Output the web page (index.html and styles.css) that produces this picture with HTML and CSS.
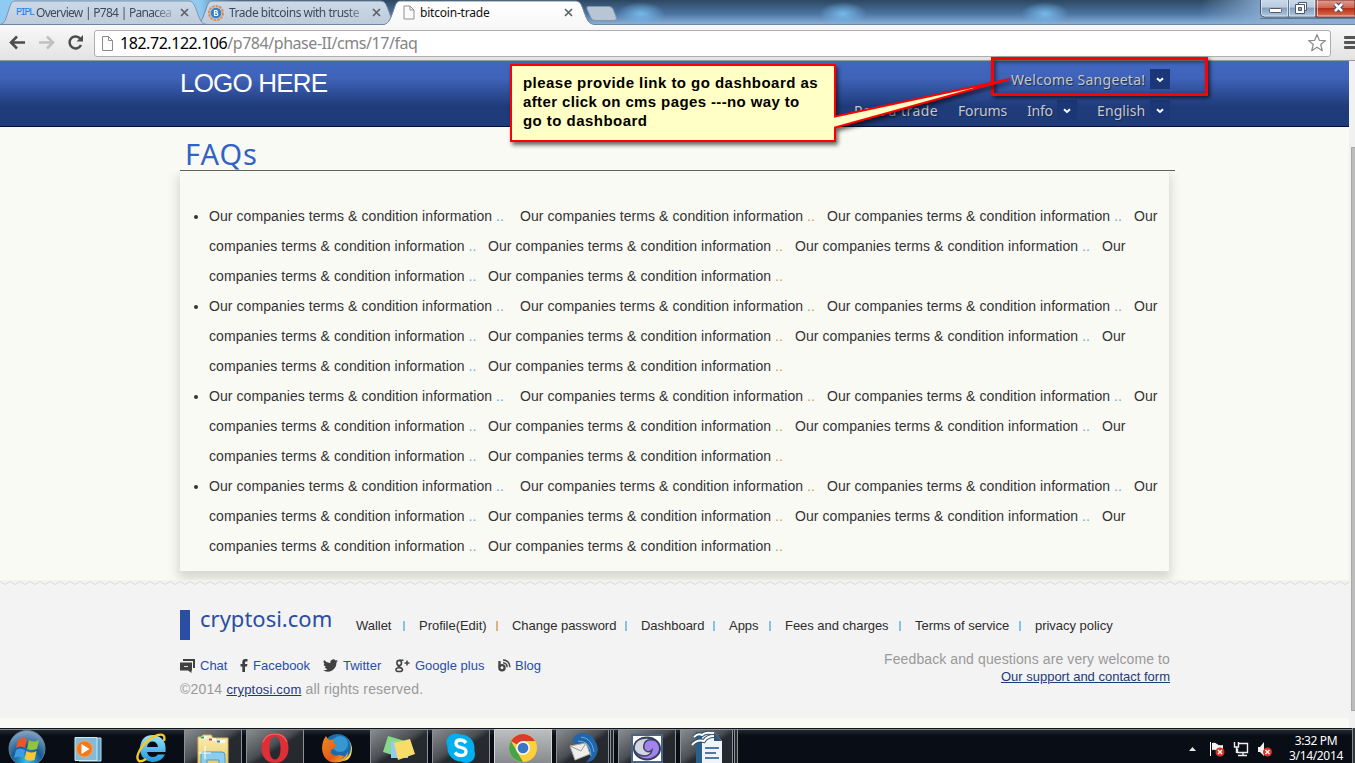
FILE: index.html
```
<!DOCTYPE html>
<html lang="en">
<head>
<meta charset="utf-8">
<title>bitcoin-trade</title>
<link rel="stylesheet" href="styles.css">
</head>
<body>
<div class="screen">
  <div class="tabstrip">
    <svg class="tab-shapes" width="1355" height="25" viewBox="0 0 1355 25">
      <defs>
        <linearGradient id="tabg" x1="0" y1="0" x2="0" y2="1"><stop offset="0" stop-color="#ccd9e8"/><stop offset="1" stop-color="#becbdb"/></linearGradient>
        <linearGradient id="actg" x1="0" y1="0" x2="0" y2="1"><stop offset="0" stop-color="#fff"/><stop offset="1" stop-color="#f8f8f8"/></linearGradient>
      </defs>
      <path d="M195 24.5 C201 24 202 20 206 9 C208 3 209 1 213 1 H380 C385 1 386 4 388 9 C392 20 393 24 399 24.5Z" fill="url(#tabg)" stroke="#74889d"/>
      <path d="M0 24.500 C5 24 6 18 9 9 C11 3 12 1 16 1 H188 C193 1 194 4 196 9 C200 20 201 24 207 24.500Z" fill="url(#tabg)" stroke="#8092a5"/>
      <path d="M380 25 C389 25 390 20 394 9 C396 3 397 1 401 1 H575 C580 1 581 4 583 9 C587 20 588 24 595 24.500 V26 H380Z" fill="url(#actg)" stroke="#71849a"/>
      <path d="M588 6.500 H609 Q612 6.500 613 9 L616.500 18 Q617 20.500 614 20.500 H595 Q592 20.500 591 18 L587 9 Q586.500 6.500 588 6.500Z" fill="#b7c5d5" stroke="#8395a9"/>
      <path d="M0 24.500 H382 M594 24.500 H1355" stroke="#6c87a6" fill="none"/>
    </svg>
    <div class="tab tab-one"><span class="pipl">PIPL</span><span class="tab-title fade title-one">Overview | P784 | Panacea</span>
      <svg class="x" width="9" height="9" viewBox="0 0 9 9"><path d="M1 1 8 8M8 1 1 8"/></svg></div>
    <div class="tab tab-two">
      <svg width="16" height="16" viewBox="0 0 16 16"><circle cx="8" cy="8" r="7" fill="#b9cce0" stroke="#df8c56" stroke-width="2" stroke-dasharray="2.600 1"/><circle cx="8" cy="8" r="5.300" fill="#3880c4"/><path d="M6.500 5v6M6.500 5.500h2q1.500 1 0 2.400h-2 2.500q1.500 1.400 0 2.600H6.500" fill="none" stroke="#fff" stroke-width="1.200"/></svg>
      <span class="tab-title fade title-two">Trade bitcoins with truste</span>
      <svg class="x" width="9" height="9" viewBox="0 0 9 9"><path d="M1 1 8 8M8 1 1 8"/></svg></div>
    <div class="tab tab-three">
      <svg width="12" height="15" viewBox="0 0 12 15"><path d="M1 1h6l4 4v9H1z M7 1v4h4" fill="#fafafa" stroke="#919191"/></svg>
      <span class="tab-title title-three">bitcoin-trade</span>
      <svg class="x" width="9" height="9" viewBox="0 0 9 9"><path d="M1 1 8 8M8 1 1 8"/></svg></div>
    <svg class="window-buttons" width="95" height="19" viewBox="0 0 95 19">
      <defs>
        <linearGradient id="wb" x1="0" y1="0" x2="0" y2="1"><stop offset="0" stop-color="#cddbec"/><stop offset=".45" stop-color="#b8cbe0"/><stop offset=".5" stop-color="#829ebd"/><stop offset="1" stop-color="#b3cae2"/></linearGradient>
        <linearGradient id="wr" x1="0" y1="0" x2="0" y2="1"><stop offset="0" stop-color="#e1a092"/><stop offset=".45" stop-color="#ce6652"/><stop offset=".5" stop-color="#b72e19"/><stop offset="1" stop-color="#df7651"/></linearGradient>
      </defs>
      <path d="M.5-1V13q0 4 4 4H95V-1z" fill="url(#wb)" stroke="#42566d"/>
      <path d="M56 0h39v17H56z" fill="url(#wr)" stroke="#6a2b2b"/>
      <path d="M1.500 0V13q0 3 3 3H27.500V0M29.500 0V16H54.500V0M57.500 0V16H95" stroke="#e5eef7" stroke-opacity=".7" fill="none"/>
      <path d="M28.500 0v17M0 18.500h95" stroke="#60758f"/>
      <rect x="9.500" y="8.500" width="12" height="4" rx="1" fill="#fff" stroke="#585663"/>
      <path d="M38.500 2.500h8v8h-8z" fill="#fff" stroke="#52566a"/><path d="M35.500 4.500h9v9h-9z" fill="#fff" stroke="#52566a"/><path d="M38.500 7.500h3v3h-3z" fill="#8ba2bd" stroke="#52566a"/>
      <path d="M75 4 82 11M82 4 75 11" stroke="#505469" stroke-width="5"/><path d="M75 3.800 82 11.200M82 3.800 75 11.200" stroke="#fff" stroke-width="2.600"/>
    </svg>
  </div>

  <div class="toolbar">
    <svg class="nav-icons" width="94" height="35" viewBox="0 0 94 35">
      <path d="M25 17.500H12M17 11.500l-6 6 6 6" fill="none" stroke="#4c4c4c" stroke-width="2.500"/>
      <path d="M39 17.500H52M47 11.500l6 6-6 6" fill="none" stroke="#c0c0c0" stroke-width="2.500"/>
      <path d="M80.500 14A6 6 0 1 0 81 20" fill="none" stroke="#4c4c4c" stroke-width="2.500"/><path d="M83 10v6.500h-6.500z" fill="#4c4c4c"/>
    </svg>
    <div class="omnibox">
      <svg width="13" height="17" viewBox="0 0 13 17"><path d="M1.500 1.500h6l4 4v10h-10z M7.500 1.500v4h4" fill="#fdfdfd" stroke="#8b8b8b"/></svg>
      <span class="url"><span class="host">182.72.122.106</span>/p784/phase-II/cms/17/faq</span>
      <svg class="star" width="20" height="20" viewBox="0 0 20 20"><path d="M10 1.500 12.300 7.300 18.400 7.600 13.700 11.500 15.300 17.700 10 14.300 4.700 17.700 6.300 11.500 1.600 7.600 7.700 7.300Z" fill="#fff" stroke="#8a8a8a" stroke-width="1.200" stroke-linejoin="round"/></svg>
    </div>
    <div class="burger"><i></i><i></i><i></i></div>
  </div>

  <div class="viewport">
    <div class="page">
      <header class="site-header">
        <div class="header-inner">
          <div class="logo">LOGO HERE</div>
          <nav class="menus">
            <div class="menu-row welcome"><span class="w-welcome">Welcome Sangeeta!</span><b class="drop"><svg width="8" height="6" viewBox="0 0 8 6"><path d="M1 1.200 4 4 7 1.200"/></svg></b></div>
            <div class="menu-row lower">
              <span class="m-post">Post a trade</span><span class="m-forums">Forums</span><span class="m-info">Info</span><b class="drop dim"><svg width="8" height="6" viewBox="0 0 8 6"><path d="M1 1.200 4 4 7 1.200"/></svg></b><span class="m-english">English</span><b class="drop dim"><svg width="8" height="6" viewBox="0 0 8 6"><path d="M1 1.200 4 4 7 1.200"/></svg></b>
            </div>
          </nav>
        </div>
      </header>

      <main class="content">
        <h1>FAQs</h1>
        <div class="panel">
          <ul>
            <li>
              <div class="line"><span class="p first">Our companies terms &amp; condition information <em>..</em></span><span class="p">Our companies terms &amp; condition information <em class="warm">..</em></span><span class="p">Our companies terms &amp; condition information <em>..</em></span><span>Our</span></div>
              <div class="line"><span class="p rest">companies terms &amp; condition information <em>..</em></span><span class="p">Our companies terms &amp; condition information <em class="warm">..</em></span><span class="p">Our companies terms &amp; condition information <em>..</em></span><span>Our</span></div>
              <div class="line"><span class="p rest">companies terms &amp; condition information <em>..</em></span><span class="p">Our companies terms &amp; condition information <em class="warm">..</em></span></div>
            </li>
            <li>
              <div class="line"><span class="p first">Our companies terms &amp; condition information <em>..</em></span><span class="p">Our companies terms &amp; condition information <em class="warm">..</em></span><span class="p">Our companies terms &amp; condition information <em>..</em></span><span>Our</span></div>
              <div class="line"><span class="p rest">companies terms &amp; condition information <em>..</em></span><span class="p">Our companies terms &amp; condition information <em class="warm">..</em></span><span class="p">Our companies terms &amp; condition information <em>..</em></span><span>Our</span></div>
              <div class="line"><span class="p rest">companies terms &amp; condition information <em>..</em></span><span class="p">Our companies terms &amp; condition information <em class="warm">..</em></span></div>
            </li>
            <li>
              <div class="line"><span class="p first">Our companies terms &amp; condition information <em>..</em></span><span class="p">Our companies terms &amp; condition information <em class="warm">..</em></span><span class="p">Our companies terms &amp; condition information <em>..</em></span><span>Our</span></div>
              <div class="line"><span class="p rest">companies terms &amp; condition information <em>..</em></span><span class="p">Our companies terms &amp; condition information <em class="warm">..</em></span><span class="p">Our companies terms &amp; condition information <em>..</em></span><span>Our</span></div>
              <div class="line"><span class="p rest">companies terms &amp; condition information <em>..</em></span><span class="p">Our companies terms &amp; condition information <em class="warm">..</em></span></div>
            </li>
            <li>
              <div class="line"><span class="p first">Our companies terms &amp; condition information <em>..</em></span><span class="p">Our companies terms &amp; condition information <em class="warm">..</em></span><span class="p">Our companies terms &amp; condition information <em>..</em></span><span>Our</span></div>
              <div class="line"><span class="p rest">companies terms &amp; condition information <em>..</em></span><span class="p">Our companies terms &amp; condition information <em class="warm">..</em></span><span class="p">Our companies terms &amp; condition information <em>..</em></span><span>Our</span></div>
              <div class="line"><span class="p rest">companies terms &amp; condition information <em>..</em></span><span class="p">Our companies terms &amp; condition information <em class="warm">..</em></span></div>
            </li>
          </ul>
        </div>
      </main>

      <footer class="site-footer">
        <svg class="zigzag" width="1349" height="6"><defs><pattern id="zz" width="10" height="6" patternUnits="userSpaceOnUse"><path d="M0 0V2L5 5 10 2V0Z" fill="#f3f3ed"/><path d="M-1 1.500 0 1.500 5 4.500 10 1.500 11 1.500" fill="none" stroke="#d9d9d9"/></pattern></defs><rect width="1349" height="6" fill="url(#zz)"/></svg>
        <div class="footer-inner">
          <div class="footer-top">
            <div class="brand"><span>cryptosi.com</span></div>
            <ul class="links"><li>Wallet</li><li class="warm-sep">Profile(Edit)</li><li>Change password</li><li>Dashboard</li><li>Apps</li><li>Fees and charges</li><li>Terms of service</li><li>privacy policy</li></ul>
          </div>
          <div class="footer-bottom">
            <div class="left">
              <div class="social">
                <span class="s-chat"><svg width="16" height="15" viewBox="0 0 16 15"><path d="M3 1h12v9h-2V3H3z" fill="#404040"/><path d="M0 4.500h12v8h-.5v2.500L8 12.500H0z" fill="#404040"/><path d="M4 8.500h4" stroke="#ddd"/></svg>Chat</span>
                <span class="s-face"><svg width="8" height="15" viewBox="0 0 8 15"><path d="M7.500 1v2.500H6q-1 0-1 1V6h2.400L7 8.500H5V14H2.300V8.500H.5V6h1.800V4q0-3 3-3z" fill="#404040"/></svg>Facebook</span>
                <span class="s-tw"><svg width="15" height="15" viewBox="0 0 24 24"><path d="M23.900 4.600a10 10 0 0 1-2.800.8 5 5 0 0 0 2.200-2.700c-1 .6-2 1-3.100 1.200a4.900 4.900 0 0 0-8.400 4.500A14 14 0 0 1 1.700 3.200a4.900 4.900 0 0 0 1.500 6.600c-.8 0-1.600-.2-2.200-.6a4.900 4.900 0 0 0 3.900 4.900c-.7.200-1.500.2-2.200.1a4.900 4.900 0 0 0 4.600 3.400A9.900 9.900 0 0 1 0 19.500a14 14 0 0 0 21.500-12.400c1-.7 1.800-1.600 2.400-2.500z" fill="#404040"/></svg>Twitter</span>
                <span class="s-gp"><svg width="15" height="15" viewBox="0 0 15 15"><ellipse cx="4.200" cy="5" rx="2.300" ry="2.600" fill="none" stroke="#454545" stroke-width="1.600"/><ellipse cx="4.200" cy="11.700" rx="3.300" ry="1.900" fill="none" stroke="#454545" stroke-width="1.500"/><path d="M4.500 2.200h4M4.500 7.500 3.500 8.500l3 1.600M12 2.500v5M9.500 5h5" fill="none" stroke="#454545" stroke-width="1.500"/></svg>Google plus</span>
                <span class="s-blog"><svg width="13" height="13" viewBox="0 0 13 13"><path d="M1.500 2v6" stroke="#454545" stroke-width="2.400"/><circle cx="4" cy="8.800" r="2.600" fill="none" stroke="#454545" stroke-width="2.300"/><path d="M5 3.800q4 .2 4.200 4.400M5 1q6.600.2 7 7.200" fill="none" stroke="#454545" stroke-width="1.500"/></svg>Blog</span>
              </div>
              <div class="copy">©2014 <a>cryptosi.com</a> all rights reserved.</div>
            </div>
            <div class="right"><div class="feedback">Feedback and questions are very welcome to</div><a>Our support and contact form</a></div>
          </div>
        </div>
      </footer>
    </div>
    <div class="scrollbar"><div class="thumb"></div></div>
  </div>

  <div class="taskbar">
    <svg class="task-icons" width="740" height="35" viewBox="0 728 740 35">
      <defs>
        <radialGradient id="orb" cx=".5" cy=".85" r=".9"><stop offset="0" stop-color="#35c5ee"/><stop offset=".45" stop-color="#145a93"/><stop offset="1" stop-color="#9ab2c8"/></radialGradient>
        <linearGradient id="btn" x1="0" y1="0" x2="1" y2="1"><stop offset="0" stop-color="#8b8e91"/><stop offset=".45" stop-color="#4b4f53"/><stop offset=".55" stop-color="#272b2f"/><stop offset="1" stop-color="#24282c"/></linearGradient>
        <linearGradient id="btnon" x1="0" y1="0" x2="0" y2="1"><stop offset="0" stop-color="#bcbec0"/><stop offset="1" stop-color="#85888b"/></linearGradient>
        <linearGradient id="ie" x1="0" y1="0" x2="0" y2="1"><stop offset="0" stop-color="#9be4fc"/><stop offset="1" stop-color="#1c98dc"/></linearGradient>
        <linearGradient id="fold" x1="0" y1="0" x2="0" y2="1"><stop offset="0" stop-color="#fbefb5"/><stop offset="1" stop-color="#e8c865"/></linearGradient>
        <linearGradient id="fx" x1="0" y1="0" x2="1" y2="1"><stop offset="0" stop-color="#ef8a22"/><stop offset=".6" stop-color="#e25a18"/><stop offset="1" stop-color="#ffc72e"/></linearGradient>
      </defs>
      <g stroke="#8d9094" fill="url(#btn)">
        <path d="M184.500 765V729.500h57V765z"/><path d="M246.500 765V729.500h57V765z"/><path d="M370.500 765V729.500h57V765z"/><path d="M432.500 765V729.500h57V765z"/><path d="M556.500 765V729.500h52V765z"/><path d="M618.500 765V729.500h57V765z"/><path d="M680.500 765V729.500h52V765z"/>
        <path d="M494.500 765V729.500h57V765z" fill="url(#btnon)" stroke="#d5d6d7"/>
        <path d="M610.500 765V729.500h3V765zM734.500 765V729.500h3V765z" fill="#25292c"/>
      </g>
      <circle cx="27" cy="748.500" r="18" fill="url(#orb)" stroke="#617b93"/>
      <path d="M18 740q5-4 9-1l-2 9q-5-3-9 0z" fill="#e8562a"/><path d="M29 740q5 3 10 0l-2 9q-5 2-10 0z" fill="#8fc43c"/><path d="M16 750q4-3 9 0l-2 8q-4-3-9 0z" fill="#3d9de0"/><path d="M26.500 751q5 3 10 0l-2 9q-5 2-10-1z" fill="#fbc632"/>
      <path d="M79 738h22v23H79z" fill="#5fa5c9" stroke="#b7dfef"/><path d="M75 737.500h22v23H75z" fill="#83bbd8" stroke="#cceaf5"/><circle cx="84.500" cy="749" r="8" fill="#f37a1c" stroke="#fba65a"/><path d="M81.500 744v10l8-5z" fill="#fff"/>
      <path fill-rule="evenodd" d="M165.500 752H147q1 5 6 5 3 0 5-2.500h7q-4 8-13 7.500-12-2-12-14 1-13 13-13 14 2 12.500 17zM147 747h11q-1-5.500-5.500-5.500t-5.500 5.500z" fill="url(#ie)"/><path d="M164 741q2-8-6-6-10 3-17 13-6 10-2 13 3 1 7-2" fill="none" stroke="#f5ca26" stroke-width="2.400"/>
      <path d="M198 765V737h3l2-2h8l2 3h15v27z" fill="url(#fold)" stroke="#d4b65c"/><path d="M201 737.500h6M209 739.500h7M217 741.500h8" stroke="#fff" stroke-width="2.500"/><path d="M201 737.500h3" stroke="#33a852" stroke-width="2"/><path d="M209 739.500h3" stroke="#d8452e" stroke-width="2"/><path d="M217 741.500h3" stroke="#2b82cf" stroke-width="2"/>
      <path d="M201 765v-10q0-3 3-3h18q3 0 3 3v10h-6v-5h-12v5z" fill="#8bcdec" stroke="#4c9cc8"/><path d="M205 746v13M199 753h12" stroke="#fff" stroke-width="1"/>
      <path fill-rule="evenodd" d="M275 733c8 0 13.500 6 13.500 15S283 763 275 763s-13.500-6-13.500-15S267 733 275 733zM275 736.500c-4 0-5.500 5-5.500 11.500s1.500 11.500 5.500 11.500 5.500-5 5.500-11.500-1.500-11.500-5.500-11.500z" fill="#df2f36"/><path d="M263 742q3-8 12-8 9 0 12 8" fill="none" stroke="#f2686b" stroke-width="1.200"/>
      <circle cx="337.500" cy="748" r="14" fill="#176cb2"/><circle cx="340" cy="744" r="8" fill="#3598d2"/><path d="M347 738q6 7 3 15-3 6-8 8 10 0 10-13-1-6-5-10z" fill="#ffd34a"/><path d="M326 736q1 3 4 4l4-1-1 4 4 2-4 4q-3 1-2 4 3 4 8 2l5 1q-3 4-8 4 8 0 12-8 0 8-8 10-16 3-18-13 0-8 4-13z" fill="url(#fx)"/>
      <path d="M388 736 405 741 399 757 383 752z" fill="#87d989"/><path d="M391 741h17v17h-17z" fill="#94caf5"/><path d="M394 743 410 739 415 754 398 760z" fill="#f7dc69"/>
      <rect x="446.500" y="733.500" width="18" height="18" rx="8.500" fill="#00aff0"/><rect x="457" y="745" width="18" height="18" rx="8.500" fill="#00aff0"/><circle cx="461" cy="748" r="13.500" fill="#00aff0"/><path d="M466 743q-2-3-6-3-4 0-4 3.500 0 3 5 4 5 1 5 4 0 4-5 4-4 0-6-3" fill="none" stroke="#fff" stroke-width="3.300"/>
      <circle cx="523" cy="748" r="14" fill="#fbd03c"/><path d="M523 748 510.900 741A14 14 0 0 1 535.100 741H523z" fill="#db3b2c"/><path d="M510.900 741 519 755 523 762A14 14 0 0 1 510.900 741z" fill="#45a349"/><circle cx="523" cy="748" r="7" fill="#f5f5f5"/><circle cx="523" cy="748" r="5.300" fill="#3976c4"/>
      <path d="M572 742q2-10 13-9 12 4 13 17-3 13-12 12 6-5 5-12-6 2-12-5-4-4-7-3z" fill="#2165ab"/><path d="M581 737q11 1 13 15M578 741q13 0 13 15" fill="none" stroke="#62aeea"/><path d="M570 746 586 743 590 754 575 760z" fill="#f0eeea" stroke="#aaa"/><path d="M570 746 581 751 586 743" fill="none" stroke="#999"/>
      <path d="M632 735h30v27h-30z" fill="#fff" stroke="#4a6488" stroke-width="2"/><ellipse cx="647" cy="748.500" rx="13" ry="11" fill="#a283ec" stroke="#343d5a" stroke-width="2"/><path d="M634 749q0-11 13-11 4 0 6 2-8-1-9 5-1 4 2 6 3 2 6-1-1 6-8 6-8-1-10-7z" fill="#d2d7df" stroke="#3d4562" stroke-width="1.500"/>
      <path d="M696 732h18l8 9v25h-26z" fill="#eff4fa"/><path d="M714 732v9h8z" fill="#315777"/><path d="M696 732h6v34h-6z" fill="#2a608d"/><path d="M705 748h14M705 753h11M705 758h14" stroke="#5279a4" stroke-width="2"/><path d="M692 745q5-6 12-4 3-5 10-5M694 737q4-4 8-2 3-3 9-2" fill="none" stroke="#34506a" stroke-width="4"/><path d="M692 745q5-6 12-4 3-5 10-5M694 737q4-4 8-2 3-3 9-2" fill="none" stroke="#fff" stroke-width="2"/>
    </svg>
    <div class="tray">
      <svg width="100" height="35" viewBox="1180 728 100 35">
        <path d="M1189 751h7l-3.500-4z" fill="#e8e8e8"/>
        <path d="M1210.500 742v14" stroke="#fff"/><path d="M1212 743q3-1 5 1t6 1v7q-4 1-6-1t-5-1z" fill="#f3f3f3"/><circle cx="1220" cy="752" r="4.500" fill="#d83225"/><path d="M1218 750l4 4M1222 750l-4 4" stroke="#fff" stroke-width="1.400"/>
        <path d="M1238.500 743.500h9v9h-10v-4M1234.500 742v5h4v-5M1236.500 747v6M1243 753v2M1238 755.500h9" fill="none" stroke="#eee" stroke-width="1.400"/>
        <path d="M1258 747h2l4-5v14l-4-4h-2z" fill="#f1f1f1"/><circle cx="1267.500" cy="752" r="4.500" fill="#d83225"/><path d="M1265.500 750l4 4M1269.500 750l-4 4" stroke="#fff" stroke-width="1.400"/>
      </svg>
      <div class="clock"><span class="time">3:32 PM</span><span class="date">3/14/2014</span></div>
      <div class="peek"></div>
    </div>
  </div>

  <div class="focus-box"></div>
  <svg class="callout-shape" width="520" height="100" viewBox="500 55 520 100"><path d="M511 65H835V116.500L1010 79 835 127.500V141H511Z" fill="#ffffc6" stroke="#f00" stroke-width="2"/></svg>
  <div class="callout-text"><span class="c1">please provide link to go dashboard as</span><span class="c2">after click on cms pages ---no way to</span><span class="c3">go to dashboard</span></div>
</div>
</body>
</html>
```
FILE: styles.css
```
* { box-sizing: border-box; }
body { margin: 0; font-family: "Liberation Sans", Arial, sans-serif; }
ul { list-style: none; margin: 0; padding: 0; }
span, a, .logo, .brand, h1 { white-space: nowrap; }
svg { display: block; flex: none; }
.screen { position: relative; width: 1355px; height: 763px; overflow: hidden; display: flex; flex-direction: column; }

.tabstrip { position: relative; height: 25px; flex: none; display: flex; font: 12px "Noto Sans", sans-serif; color: #3f4a56;
  background:
    radial-gradient(ellipse 24px 12px at 641px 14px, #76b8ea, transparent),
    radial-gradient(ellipse 24px 12px at 843px 14px, #76b8ea, transparent),
    radial-gradient(ellipse 24px 12px at 1045px 14px, #76b8ea, transparent),
    linear-gradient(90deg, #8fcaf4 0 200px, transparent 240px),
    linear-gradient(90deg, transparent 1200px, #8badd2 1270px),
    linear-gradient(#2d4761, #4b74a2 55%, #86aed6 95%); }
.tab-shapes { position: absolute; left: 0; top: 0; }
.tab { position: relative; display: flex; align-items: center; height: 25px; }
.tab-one { width: 208px; padding-left: 16px; }
.tab-two { width: 195px; }
.tab-three { width: 200px; }
.pipl { width: 20px; font: 10px "Liberation Mono", monospace; letter-spacing: -1.700px; color: #2185e8; }
.title-one { width: 138px; letter-spacing: -.72px; }
.title-two { width: 137px; margin-left: 5px; letter-spacing: -.5px; }
.title-three { width: 138px; margin-left: 5px; color: #111; letter-spacing: -.2px; }
.tab-title { margin-right: 6px; }
.fade { -webkit-mask-image: linear-gradient(90deg, #000 85%, rgba(0,0,0,.2)); mask-image: linear-gradient(90deg, #000 85%, rgba(0,0,0,.2)); }
.x { fill: none; stroke: #5b646d; stroke-width: 1.700; }
.window-buttons { position: absolute; right: 0; top: 0; }

.toolbar { height: 36px; flex: none; display: flex; align-items: center; background: linear-gradient(#f9f9f9, #e3e3e3); border-bottom: 1px solid #9a9a9a; }
.omnibox { width: 1237px; height: 27px; margin-top: 1px; border: 1px solid #aeaeae; border-radius: 3px; background: #fff; display: flex; align-items: center; padding-left: 6px; }
.url { margin-left: 6px; font: 16px "Noto Sans", sans-serif; color: #858585; letter-spacing: -.45px; }
.host { color: #000; }
.star { margin-left: auto; margin-right: 3px; }
.burger { margin-left: 13px; width: 11px; display: grid; gap: 2px; }
.burger i { height: 3px; background: #555; border-radius: 1px 0 0 1px; }

.viewport { height: 667px; flex: none; display: flex; }
.page { width: 1349px; background: #fafaf5; }
.scrollbar { width: 6px; background: #f1f1f1; padding: 86px 0 0 2px; }
.thumb { height: 564px; background: #bcbcbc; border: 1px solid #a8a8a8; border-right: 0; }

.site-header { height: 66px; background: linear-gradient(#4167c0 0, #3f63b9 26%, #1f3b7a 70%, #1f3b7a); border-bottom: 1px solid #050f37; }
.header-inner { width: 990px; margin-left: 180px; display: flex; justify-content: space-between; }
.logo { font-size: 26px; line-height: 30px; margin-top: 7px; color: #fff; letter-spacing: -.8px; }
.menus { display: flex; flex-direction: column; align-items: flex-end; padding-top: 8px; font: 14px "Noto Sans", sans-serif; color: #c8c8c8; text-shadow: 1px 1px 1px #152a58; }
.menu-row { display: flex; align-items: center; height: 20px; }
.lower { margin-top: 11px; }
.w-welcome { width: 139px; letter-spacing: .3px; }
.m-post { width: 104px; letter-spacing: .45px; }
.m-forums { width: 69px; letter-spacing: -.15px; }
.m-info { width: 30px; letter-spacing: -.2px; }
.m-english { width: 53px; margin-left: 20px; letter-spacing: .1px; }
.drop { width: 20px; height: 20px; padding-top: 2px; background: #1b3778; display: grid; place-items: center; }
.drop.dim { background: #1c3776; }
.drop path { stroke: #fff; stroke-width: 2; fill: none; }

.content { height: 453px; padding-left: 180px; }
h1 { width: 995px; height: 44px; margin: 0; padding: 8px 0 0 5px; border-bottom: 1px solid #60605e; font: 29px/38px "Noto Sans", sans-serif; color: #3163c5; letter-spacing: 1px; }
.panel { width: 989px; height: 400px; padding: 30px 0 0 29px; box-shadow: 0 6px 10px 2px rgba(75, 80, 60, .2); clip-path: inset(0 -20px -20px -20px); font-size: 14px; line-height: 30px; color: #333; letter-spacing: .07px; background: #fafaf5; }
.panel li { position: relative; }
.panel li::before { content: ""; position: absolute; left: -15px; top: 14px; width: 4px; height: 4px; border-radius: 2px; background: #333; }
.line { display: flex; height: 30px; }
.p { width: 307px; }
.first { width: 311px; }
.rest { width: 279px; }
.p em { font-style: normal; color: #6ba9cf; }
.p em.warm { color: #d19a5c; }

.site-footer { position: relative; height: 138px; background: #f3f3f3; padding-left: 180px; }
.zigzag { margin-left: -180px; }
.footer-inner { width: 990px; }
.footer-top { display: flex; padding-top: 24px; height: 70px; }
.brand { width: 176px; height: 30px; border-left: 10px solid #2b4da3; padding-left: 10px; font: 22px/16px "Noto Sans", sans-serif; color: #2b4da3; }
.links { display: grid; grid-template-columns: 63px 93px 129px 88px 56px 130px 120px 80px; font-size: 13px; line-height: 15px; padding-top: 8px; color: #2d2d2d; }
.links li { position: relative; white-space: nowrap; letter-spacing: -.03px; }
.links li:not(:last-child)::after { content: ""; position: absolute; right: 14px; top: 3px; width: 2px; height: 10px; background: #84c3e9; }
.links li.warm-sep::after { background: #e0b37e; }
.footer-bottom { display: flex; justify-content: space-between; }
.social { display: flex; height: 18px; font-size: 13px; color: #2b4da3; align-items: center; }
.social span { display: flex; align-items: center; gap: 5px; }
.social .s-chat { gap: 4px; } .social .s-blog { gap: 4px; }
.s-chat { width: 60px; } .s-face { width: 83px; } .s-tw { width: 72px; } .s-gp { width: 103px; }
.copy { margin-top: 7px; font-size: 14px; line-height: 17px; color: #999; letter-spacing: .17px; }
.copy a, .right a { font-size: 13px; color: #1e3a78; text-decoration: underline; }
.right { text-align: right; margin-top: -6px; font-size: 14px; line-height: 18px; color: #999; }
.feedback { letter-spacing: .1px; }
.right a { display: block; }

.taskbar { height: 35px; flex: none; display: flex; justify-content: space-between; background: linear-gradient(#11161b 0 1px, #7d8489 1px 2px, #202830 2px, #090d15 8px, #080c14); }
.tray { display: flex; color: #fff; font: 12px/16px "Noto Sans", sans-serif; }
.clock { width: 72px; padding-top: 5px; display: flex; flex-direction: column; align-items: center; letter-spacing: -.35px; }
.date { line-height: 14px; }
.peek { width: 3px; background: #31363b; border-left: 1px solid #888; }

.focus-box { position: absolute; left: 991px; top: 57px; width: 217px; height: 39px; border: 3px solid #f00; box-shadow: 2px 2px 4px rgba(0,0,0,.65), inset 2px 2px 4px rgba(0,0,0,.5); }
.callout-shape { position: absolute; left: 500px; top: 55px; filter: drop-shadow(2px 3px 2px rgba(0,0,0,.6)); }
.callout-text { position: absolute; left: 523px; top: 73px; display: flex; flex-direction: column; font: bold 15px/19px "Liberation Sans", sans-serif; color: #000; letter-spacing: .46px; }
.c2 { letter-spacing: .38px; }
```
